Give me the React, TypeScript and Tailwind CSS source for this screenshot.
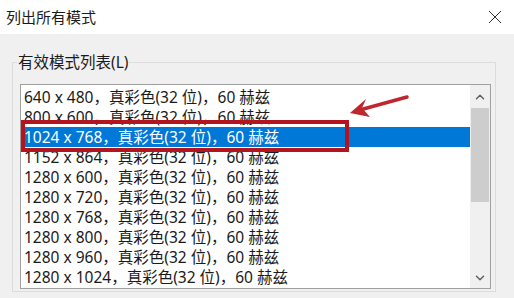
import { ChevronUp, ChevronDown } from "lucide-react";

const modes = [
  "640 x 480，真彩色(32 位)，60 赫兹",
  "800 x 600，真彩色(32 位)，60 赫兹",
  "1024 x 768，真彩色(32 位)，60 赫兹",
  "1152 x 864，真彩色(32 位)，60 赫兹",
  "1280 x 600，真彩色(32 位)，60 赫兹",
  "1280 x 720，真彩色(32 位)，60 赫兹",
  "1280 x 768，真彩色(32 位)，60 赫兹",
  "1280 x 800，真彩色(32 位)，60 赫兹",
  "1280 x 960，真彩色(32 位)，60 赫兹",
  "1280 x 1024，真彩色(32 位)，60 赫兹",
];

const selected = 2;

const App = () => {
  return (
    <div
      className="relative w-[514px] h-[298px] overflow-hidden bg-[#f0f0f0] text-[#1a1a1a]"
      style={{ fontFamily: '"Noto Sans", "Noto Sans CJK SC", sans-serif' }}
    >
      {/* title bar */}
      <div className="h-[34px] bg-white flex items-center justify-between pl-[6px] pr-[12px]">
        <span className="text-[15px] leading-[20px]">列出所有模式</span>
        <svg width="14" height="14" viewBox="0 0 14 14" className="text-[#333]">
          <path d="M1 1 L13 13 M13 1 L1 13" stroke="currentColor" strokeWidth="1" fill="none" />
        </svg>
      </div>

      {/* group box */}
      <fieldset className="mt-[18px] ml-[12px] w-[484px] h-[240px] border border-[#dcdcdc] pl-[7px] pr-[4px]">
        <legend className="-ml-[3px] px-[1px] text-[15.5px] leading-[20px]">有效模式列表(L)</legend>

        <div className="mt-[12px] w-[471px] h-[205px] border border-[#a0a0a0] bg-white flex">
          <div className="flex-1 pt-[2px] pl-[1px] overflow-hidden">
            {modes.map((m, i) => (
              <div
                key={m}
                className={`h-[20px] pl-[2px] text-[15.5px] leading-[20px] whitespace-nowrap ${
                  i === selected ? "bg-[#0078d7] text-white" : ""
                }`}
              >
                {m}
              </div>
            ))}
          </div>

          {/* scrollbar */}
          <div className="w-[20px] bg-[#f0f0f0] flex flex-col items-center">
            <div className="h-[23px] w-full flex items-center justify-center text-[#606060]">
              <ChevronUp size={14} strokeWidth={2.5} />
            </div>
            <div className="flex-1 w-full flex flex-col">
              <div className="mx-[1px] h-[94px] bg-[#cdcdcd]" />
            </div>
            <div className="h-[21px] w-full flex items-center justify-center text-[#606060]">
              <ChevronDown size={14} strokeWidth={2.5} />
            </div>
          </div>
        </div>
      </fieldset>

      {/* annotation: red box + arrow */}
      <svg className="absolute inset-0 pointer-events-none" width="514" height="298">
        <rect x="23" y="122" width="324" height="28" fill="none" stroke="#b3141d" strokeWidth="4" />
        <path d="M407 97 L356 111" stroke="#c2262d" strokeWidth="3.5" strokeLinecap="round" fill="none" />
        <path d="M350 113 L366 99 L362 108 L370 117 Z" fill="#c2262d" />
      </svg>
    </div>
  );
};

export default App;
